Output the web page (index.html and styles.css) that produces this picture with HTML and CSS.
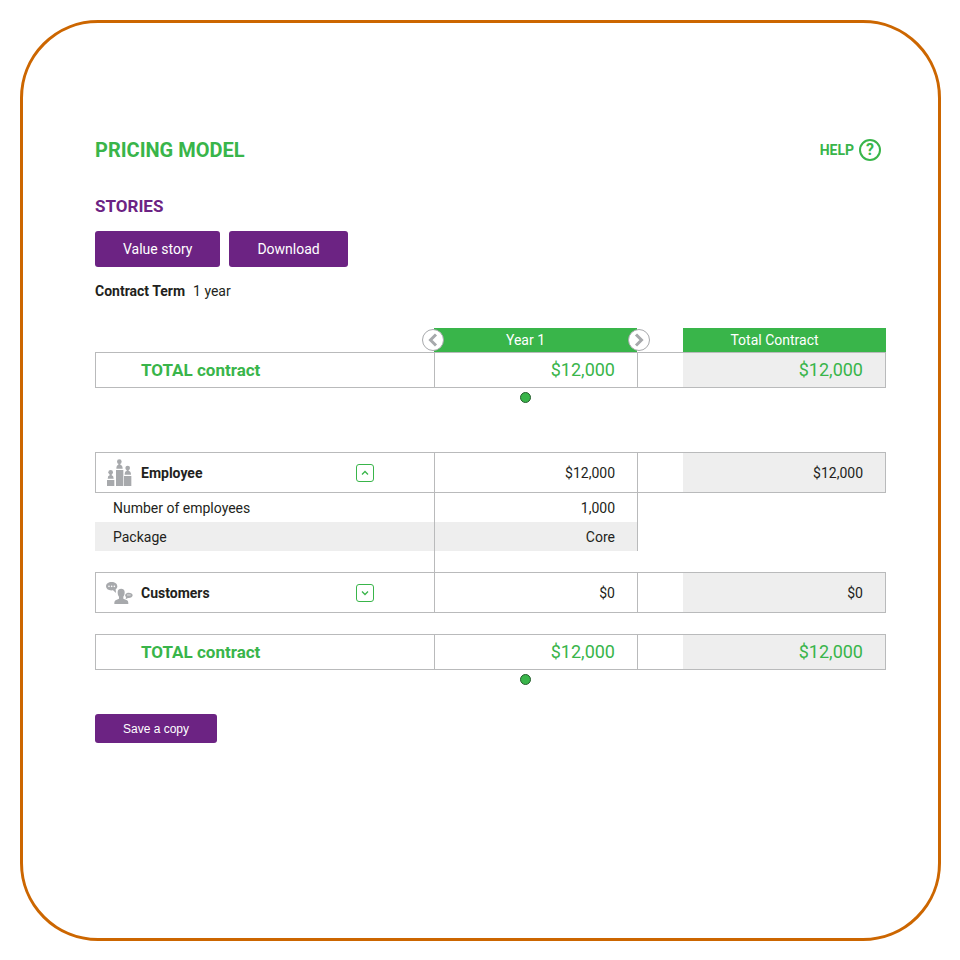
FILE: index.html
```html
<!DOCTYPE html>
<html lang="en">
  <head>
    <meta charset="utf-8" />
    <meta name="viewport" content="width=device-width, initial-scale=1" />
    <title>Pricing model</title>
    <link rel="stylesheet" href="styles.css">
  </head>
  <body>
    <main class="frame">
      <header class="page-header">
        <h1>PRICING MODEL</h1>
        <a class="help" href="#help">HELP <span class="help-icon">?</span></a>
      </header>

      <h2>STORIES</h2>
      <div class="actions">
        <button type="button" class="btn">Value story</button>
        <button type="button" class="btn">Download</button>
      </div>
      <p class="term"><strong>Contract Term</strong><span>1 year</span></p>

      <table class="pricing">
        <colgroup>
          <col />
          <col class="col-value" />
          <col class="col-gap" />
          <col class="col-value" />
        </colgroup>
        <tr class="head">
          <td></td>
          <th class="year" scope="col">
            Year 1
            <button type="button" class="arrow prev" aria-label="Previous year">
              <svg width="10" height="14" viewBox="0 0 10 14"><path d="M8 1.5 2.5 7 8 12.5" /></svg>
            </button>
            <button type="button" class="arrow next" aria-label="Next year">
              <svg width="10" height="14" viewBox="0 0 10 14"><path d="M2 1.5 7.5 7 2 12.5" /></svg>
            </button>
          </th>
          <td></td>
          <th scope="col">Total Contract</th>
        </tr>
        <tr class="boxed total">
          <th scope="row">TOTAL contract</th>
          <td>$12,000</td>
          <td></td>
          <td>$12,000</td>
        </tr>
        <tr class="pager">
          <td></td>
          <td><span class="dot"></span></td>
          <td></td>
          <td></td>
        </tr>
        <tr class="boxed group">
          <th scope="row">
            <div class="group-label">
              <svg class="icon" width="25" height="27" viewBox="0 0 75 81">
                <path d="M0 63h22v18H0zM27 33h22v48H27zM51 51h22v30H51z" />
                <circle cx="11" cy="40" r="7" />
                <path d="M8 45h6v4q6 1 6 10H2q0-9 6-10z" />
                <circle cx="37" cy="8" r="7" />
                <path d="M34 13h6v4q7 1 7 12H28q0-11 6-12z" />
                <circle cx="62" cy="27" r="7" />
                <path d="M59 32h6v4q7 1 7 11H53q0-10 6-11z" />
              </svg>
              <span>Employee</span>
              <button type="button" class="toggle" aria-label="Collapse Employee">
                <svg width="8" height="6" viewBox="0 0 8 6"><path d="M1 4.5 4 1.5 7 4.5" /></svg>
              </button>
            </div>
          </th>
          <td>$12,000</td>
          <td></td>
          <td>$12,000</td>
        </tr>
        <tr class="detail">
          <th scope="row">Number of employees</th>
          <td>1,000</td>
          <td></td>
          <td></td>
        </tr>
        <tr class="detail shaded">
          <th scope="row">Package</th>
          <td>Core</td>
          <td></td>
          <td></td>
        </tr>
        <tr class="spacer lined">
          <td></td>
          <td></td>
          <td></td>
          <td></td>
        </tr>
        <tr class="boxed group">
          <th scope="row">
            <div class="group-label">
              <svg class="icon" width="27" height="22" viewBox="0 0 81 66">
                <path d="M17 0c10 0 17 5 17 13 0 4-2 7-5 9l1 11-9-8c-13 2-21-4-21-12C0 5 7 0 17 0z" />
                <path d="M35 30c0-13 21-13 21 0 0 7-1 11-4 14v6l11 5c3 1 4 5 4 11H25c0-6 1-10 4-11l10-5v-6c-3-3-4-7-4-14z" />
                <path d="M68 32c7 0 12 3 12 8s-7 9-14 8l-7 4 1-7c-6-6 0-13 8-13z" />
                <g class="bubble-dots">
                  <circle cx="9" cy="13" r="2.5" />
                  <circle cx="17" cy="13" r="2.5" />
                  <circle cx="25" cy="13" r="2.5" />
                  <path d="M63 38h11v2H63z" />
                </g>
              </svg>
              <span>Customers</span>
              <button type="button" class="toggle" aria-label="Expand Customers">
                <svg width="8" height="6" viewBox="0 0 8 6"><path d="M1 1.5 4 4.5 7 1.5" /></svg>
              </button>
            </div>
          </th>
          <td>$0</td>
          <td></td>
          <td>$0</td>
        </tr>
        <tr class="spacer">
          <td></td>
          <td></td>
          <td></td>
          <td></td>
        </tr>
        <tr class="boxed total">
          <th scope="row">TOTAL contract</th>
          <td>$12,000</td>
          <td></td>
          <td>$12,000</td>
        </tr>
        <tr class="pager last">
          <td></td>
          <td><span class="dot"></span></td>
          <td></td>
          <td></td>
        </tr>
      </table>

      <button type="button" class="btn btn-small">Save a copy</button>
    </main>
  </body>
</html>
```

FILE: styles.css
```css
* {
  box-sizing: border-box;
}
body {
  margin: 0;
  padding: 20px 19px 19px 20px;
  background: #fff;
  color: #231f20;
  font-family: Roboto, "Noto Sans", sans-serif;
  font-size: 14px;
  line-height: 20px;
}
.frame {
  min-height: calc(100vh - 39px);
  padding: 113px 52px 72px 72px;
  border: 3px solid #c60;
  border-radius: 78px;
}
.page-header {
  display: flex;
  justify-content: space-between;
  align-items: center;
  height: 28px;
  padding-right: 5px;
}
h1,
h2 {
  margin: 0;
}
h1 {
  color: #39b54a;
  font-size: 20px;
  line-height: 28px;
}
h2 {
  margin-top: 30px;
  color: #6c2383;
  font-size: 17px;
  line-height: 24px;
}
.help {
  display: flex;
  align-items: center;
  gap: 5px;
  color: #39b54a;
  font-weight: 700;
  text-decoration: none;
}
.help-icon {
  width: 22px;
  height: 22px;
  border: 2px solid #39b54a;
  border-radius: 50%;
  font-size: 16px;
  line-height: 18px;
  text-align: center;
}
.actions {
  display: flex;
  gap: 9px;
  margin-top: 13px;
}
.btn {
  height: 36px;
  padding: 0 28px;
  border: 0;
  border-radius: 3px;
  background: #6c2383;
  color: #fff;
  font-family: inherit;
  font-size: 14px;
}
.btn-small {
  height: 29px;
  font-family: "Liberation Sans", Arial, sans-serif;
  font-size: 12px;
}
.term {
  display: flex;
  gap: 8px;
  margin: 14px 0 27px;
}
.pricing {
  width: 100%;
  table-layout: fixed;
  border-collapse: separate;
  border-spacing: 0;
}
.col-value {
  width: 203px;
}
.col-gap {
  width: 46px;
}
.pricing th,
.pricing td {
  padding: 0;
}
.head {
  height: 24px;
}
.head th {
  padding-right: 20px;
  background: #39b54a;
  color: #fff;
  font-weight: 400;
  text-align: center;
}
.year {
  position: relative;
}
.arrow {
  position: absolute;
  top: 1px;
  display: flex;
  align-items: center;
  justify-content: center;
  width: 22px;
  height: 22px;
  padding: 0;
  border: 1px solid #a7a9ac;
  border-radius: 50%;
  background: #fff;
}
.arrow path {
  fill: none;
  stroke: #a7a9ac;
  stroke-width: 3;
}
.prev {
  left: -12px;
}
.next {
  right: -13px;
}
.boxed > * {
  border: 0 solid #b9babb;
  border-width: 1px 0;
}
.boxed th {
  border-left-width: 1px;
  text-align: left;
}
.boxed td {
  text-align: right;
}
.pricing .boxed td:nth-child(2) {
  padding-right: 22px;
  border-left-width: 1px;
}
.boxed td:nth-child(3) {
  border-left-width: 1px;
}
.pricing .boxed td:last-child {
  padding-right: 22px;
  border-right-width: 1px;
  background: #eee;
}
.total {
  height: 36px;
  color: #39b54a;
  font-size: 18px;
}
.pricing .total th {
  padding-left: 45px;
  font-size: 17px;
}
.group {
  height: 41px;
}
.group-label {
  display: grid;
  grid-template-columns: 27px 1fr 18px;
  align-items: center;
  column-gap: 8px;
  padding: 0 60px 0 10px;
}
.icon {
  justify-self: center;
  fill: #a7a9ac;
}
.bubble-dots {
  fill: #fff;
}
.toggle {
  display: flex;
  align-items: center;
  justify-content: center;
  width: 18px;
  height: 18px;
  padding: 0;
  border: 1px solid #39b54a;
  border-radius: 3px;
  background: #fff;
}
.toggle path {
  fill: none;
  stroke: #39b54a;
  stroke-width: 1.3;
}
.pager {
  height: 64px;
}
.pager td {
  vertical-align: top;
}
.pager td:nth-child(2) {
  padding: 4px 20px 0 0;
}
.last {
  height: 44px;
}
.dot {
  display: block;
  width: 11px;
  height: 11px;
  margin: 0 auto;
  border: 1px solid #245c2c;
  border-radius: 50%;
  background: #39b54a;
}
.detail {
  height: 29px;
}
.pricing .detail th {
  padding-left: 18px;
  font-weight: 400;
  text-align: left;
}
.pricing .detail td:nth-child(2) {
  padding-right: 22px;
  border-left: 1px solid #b9babb;
  text-align: right;
}
.detail td:nth-child(3) {
  border-left: 1px solid #b9babb;
}
.shaded th,
.shaded td:nth-child(2) {
  background: #eee;
}
.spacer {
  height: 21px;
}
.lined td:nth-child(2) {
  border-left: 1px solid #b9babb;
}
```
